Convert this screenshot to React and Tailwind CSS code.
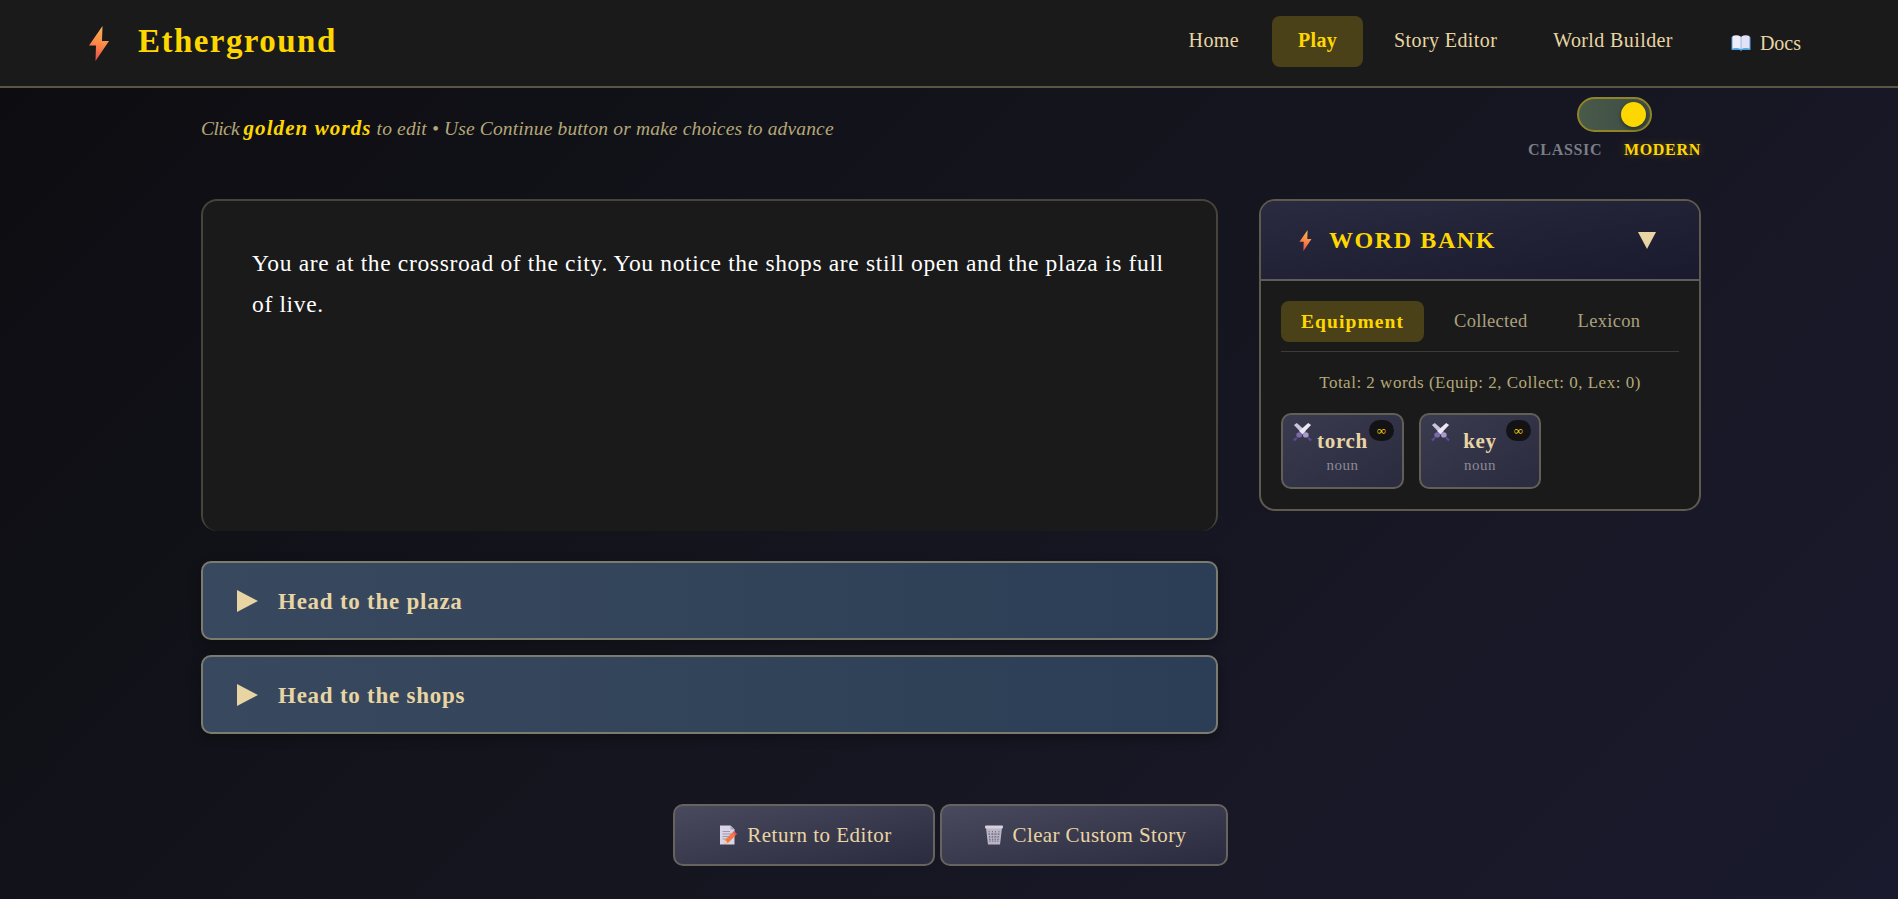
import React from "react";

function Bolt({ className, id }) {
  return (
    <svg viewBox="0 0 20 35" className={className}>
      <defs>
        <linearGradient id={id} x1="0.6" y1="0" x2="0.4" y2="1">
          <stop offset="0" stopColor="#f8b552" />
          <stop offset="0.5" stopColor="#fb8a48" />
          <stop offset="1" stopColor="#ea4c4c" />
        </linearGradient>
      </defs>
      <path d="M13.5 0 L0 19.5 L7 19.5 L6.5 35 L20 15 L13 15 Z" fill={`url(#${id})`} />
    </svg>
  );
}

function Book() {
  return (
    <svg viewBox="0 0 20 20" className="w-[20px] h-[20px] shrink-0">
      <path d="M0.5 4 L0.5 17 L9 17 L10 18.5 L11 17 L19.5 17 L19.5 4 Z" fill="#4aa3e0" />
      <path d="M1.5 3 Q6 1.5 9.7 3.5 L9.7 16 Q6 14.5 1.5 15.5 Z" fill="#f1eefb" />
      <path d="M18.5 3 Q14 1.5 10.3 3.5 L10.3 16 Q14 14.5 18.5 15.5 Z" fill="#e4e0f5" />
    </svg>
  );
}

function Memo() {
  return (
    <svg viewBox="0 0 18 20" className="w-[18px] h-[20px] shrink-0">
      <path d="M1 0.5 L11.5 0.5 L15.5 4.5 L15.5 19.5 L1 19.5 Z" fill="#d9d4e6" />
      <path d="M11.5 0.5 L15.5 4.5 L11.5 4.5 Z" fill="#a8a2bb" />
      <path d="M3.5 6.5 H11 M3.5 9 H13 M3.5 11.5 H13 M3.5 14 H8" stroke="#9d97ae" strokeWidth="1" />
      <path d="M5 18.5 L6 15 L13.5 7.5 L16.5 10.5 L9 18 Z" fill="#f5793c" />
      <path d="M13.5 7.5 L15 6 L18 9 L16.5 10.5 Z" fill="#e8505b" />
      <path d="M5 18.5 L6 15 L8.5 17.5 Z" fill="#f6d9b0" />
    </svg>
  );
}

function Trash() {
  return (
    <svg viewBox="0 0 20 20" className="w-[20px] h-[20px] shrink-0">
      <path d="M2 3 L18 3 L16 19.5 L4 19.5 Z" fill="#b9b5c6" />
      <rect x="1" y="0.5" width="18" height="3" rx="1" fill="#d5d1e0" />
      <path d="M5 6 L6 17 M8.5 6 L8.8 17 M11.5 6 L11.2 17 M15 6 L14 17 M4.5 9 H15.5 M5 12 H15 M5.3 15 H14.7" stroke="#6d697b" strokeWidth="0.9" strokeDasharray="1.4 1.1" />
    </svg>
  );
}

function Swords() {
  return (
    <svg viewBox="0 0 20 20" className="w-[19px] h-[19px] absolute left-[10px] top-[8px]">
      <path d="M1 2 L4 0 L13.5 8.5 L10.5 12 Z" fill="#c9c3dc" />
      <path d="M19 2 L16 0 L6.5 8.5 L9.5 12 Z" fill="#ece9f5" />
      <ellipse cx="6.5" cy="12.5" rx="3" ry="2.8" fill="#7c6aa6" />
      <ellipse cx="13.5" cy="12.5" rx="3" ry="2.8" fill="#a79ac8" />
      <path d="M4 15.5 L1 18.5 M16 15.5 L19 18.5" stroke="#5f4a9a" strokeWidth="2.2" />
    </svg>
  );
}

function Chip({ word, w }) {
  return (
    <div className={`relative ${w} h-[76px] rounded-[10px] border-2 border-[#625e58] bg-gradient-to-br from-[#3b3b50] to-[#2b2b40] flex flex-col items-center pt-[12px]`}>
      <Swords />
      <div className="absolute right-[8px] top-[5px] w-[25px] h-[21px] rounded-full bg-[#131316] flex items-center justify-center text-[#ffd700] text-[13px] leading-none">∞</div>
      <span className="text-[21px] leading-[26px] mt-[1px] font-bold text-[#e8d5a3] tracking-[0.7px]">{word}</span>
      <span className="text-[15px] leading-[20px] mt-[1px] text-[#8b8b92] tracking-[0.5px]">noun</span>
    </div>
  );
}

function Choice({ label }) {
  return (
    <div className="h-[79px] rounded-[10px] border-2 border-[#7b7b70] bg-gradient-to-r from-[#38495f] to-[#2c3e55] shadow-[0_4px_12px_rgba(0,0,0,0.3)] flex items-center pl-[34px]">
      <svg viewBox="0 0 21 22" className="w-[21px] h-[22px] shrink-0">
        <path d="M0 0 L21 11 L0 22 Z" fill="#e8d5a3" />
      </svg>
      <span className="ml-[20px] pt-[3px] text-[23px] font-bold text-[#e8d5a3] tracking-[0.75px]">{label}</span>
    </div>
  );
}

function ActionButton({ icon, label, w, gap, track }) {
  return (
    <button className={`${w} h-[62px] rounded-[10px] border-2 border-[#67635e] bg-gradient-to-br from-[#4a4a5e] to-[#2b2b40] flex items-center justify-center pl-[4px] ${gap} text-[21px] text-[#e8d5a3] ${track}`}>
      {icon}
      <span className="pt-[2px]">{label}</span>
    </button>
  );
}

export default function App() {
  return (
    <div className="min-h-screen bg-[linear-gradient(135deg,#0c0c10_0%,#15151f_50%,#1a1a2e_100%)] font-['Liberation_Serif',serif]">
      <header className="h-[88px] bg-[#1a1a1a] border-b-2 border-[#5a5545] flex items-center pl-[89px] pr-[97px]">
        <Bolt id="logo-bolt" className="w-[20px] h-[35px]" />
        <span className="ml-[29px] -mt-[3px] text-[33px] font-bold text-[#ffd700] tracking-[1.45px]">Etherground</span>
        <nav className="ml-auto mb-[3px] flex items-center text-[20px] text-[#e8d5a3] tracking-[0.4px]">
          <a className="mr-[33px] -mt-[4px]">Home</a>
          <a className="mr-[31px] w-[91px] h-[51px] rounded-[8px] bg-[#4a4118] text-[#ffd700] font-bold flex items-center justify-center pb-[4px]">Play</a>
          <a className="mr-[56px] -mt-[4px]">Story Editor</a>
          <a className="mr-[58px] -mt-[4px]">World Builder</a>
          <a className="mt-[3px] flex items-center gap-[9px]"><Book /><span className="tracking-[0px]">Docs</span></a>
        </nav>
      </header>

      <main className="w-[1500px] ml-[201px]">
        <div className="h-[111px] flex justify-between">
          <p className="mt-[29px] text-[19.5px] leading-[22px] italic text-[#b5a878] tracking-[0.15px]">
            <span className="tracking-[-0.6px]">Click </span><b className="text-[#ffd700] text-[21px] tracking-[1.1px]">golden words</b> to edit • Use Continue button or make choices to advance
          </p>
          <div className="flex flex-col items-center w-[173px] pt-[9px]">
            <div className="w-[75px] h-[35px] rounded-full border-2 border-[#8f8526] bg-gradient-to-r from-[#485a4a] to-[#3f4b44] flex items-center justify-end pr-[4px]">
              <span className="w-[25px] h-[25px] rounded-full bg-[#ffd700] shadow-[0_2px_4px_rgba(0,0,0,0.4)]" />
            </div>
            <div className="mt-[8px] w-full flex justify-between text-[16px] leading-[20px] font-bold tracking-[0.7px]">
              <span className="text-[#7b7e87]">CLASSIC</span>
              <span className="text-[#ffd700] [text-shadow:0_0_8px_rgba(255,215,0,0.3)]">MODERN</span>
            </div>
          </div>
        </div>

        <div className="grid grid-cols-[1017px_442px] gap-[41px] items-start">
          <div>
            <div className="h-[332px] rounded-[16px] border-2 border-b-0 border-[#47443b] bg-[#1a1a1a] pl-[49px] pr-[40px] pt-[42px] text-[23.5px] leading-[41px] text-white tracking-[0.66px]">
              You are at the crossroad of the city. You notice the shops are still open and the plaza is full of live.
            </div>
            <div className="mt-[30px] flex flex-col gap-[15px]">
              <Choice label="Head to the plaza" />
              <Choice label="Head to the shops" />
            </div>
          </div>

          <aside className="h-[312px] rounded-[16px] border-2 border-[#5e5a4e] bg-[#1a1a1a] overflow-hidden">
            <div className="h-[80px] border-b-2 border-[#5f5d5a] bg-gradient-to-br from-[#2a2a40] to-[#1a1a2e] flex items-center pl-[38px] pr-[43px]">
              <Bolt id="bank-bolt" className="w-[13px] h-[21px]" />
              <span className="ml-[17px] text-[24px] font-bold text-[#ffd700] tracking-[1.6px]">WORD BANK</span>
              <svg viewBox="0 0 18 17" className="ml-auto w-[18px] h-[17px]"><path d="M0 0 H18 L9 17 Z" fill="#e8d5a3" /></svg>
            </div>
            <div className="px-[20px]">
              <div className="mt-[20px] h-[51px] border-b border-[#3d3b36] flex items-start text-[18.5px] text-[#aba17f] tracking-[0.3px]">
                <span className="w-[143px] h-[41px] rounded-[8px] bg-[#4a4118] text-[#ffd700] text-[19.5px] tracking-[1.1px] font-bold flex items-center justify-center">Equipment</span>
                <span className="ml-[30px] h-[41px] flex items-center">Collected</span>
                <span className="ml-[50px] h-[41px] flex items-center">Lexicon</span>
              </div>
              <p className="mt-[21px] text-center text-[17px] leading-[20px] text-[#b5a878] tracking-[0.5px]">Total: 2 words (Equip: 2, Collect: 0, Lex: 0)</p>
              <div className="mt-[20px] flex gap-[15px]">
                <Chip word="torch" w="w-[123px]" />
                <Chip word="key" w="w-[122px]" />
              </div>
            </div>
          </aside>
        </div>

        <div className="mt-[70px] -ml-[2px] flex justify-center gap-[5px]">
          <ActionButton icon={<Memo />} label="Return to Editor" w="w-[262px]" gap="gap-[10px]" track="tracking-[0.5px]" />
          <ActionButton icon={<Trash />} label="Clear Custom Story" w="w-[288px]" gap="gap-[8px]" track="tracking-[0.4px]" />
        </div>
      </main>
    </div>
  );
}
